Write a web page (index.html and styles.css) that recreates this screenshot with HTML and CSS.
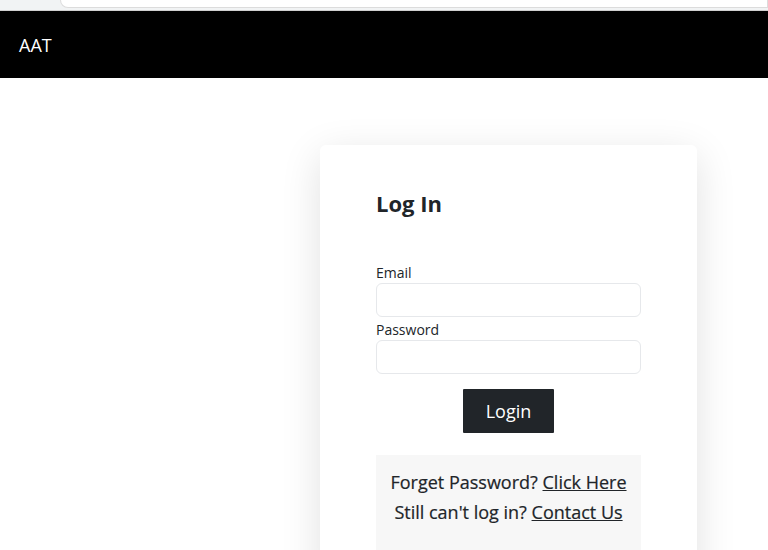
FILE: index.html
```html
<!DOCTYPE html>
<html lang="en">
<head>
    <meta charset="UTF-8">
    <meta name="viewport" content="width=device-width, initial-scale=1.0">
    <title>AAT - Log In</title>
    <link rel="stylesheet" href="styles.css">
</head>
<body>
    <div class="chrome">
        <div class="chrome-bar"></div>
    </div>

    <nav class="navbar">
        <span class="brand">AAT</span>
    </nav>

    <main class="page">
        <div class="login-card">
            <h1 class="login-title">Log In</h1>

            <form class="login-form">
                <label for="email">Email</label>
                <input type="email" id="email" class="field">
                <label for="password">Password</label>
                <input type="password" id="password" class="field">
                <div class="actions">
                    <button type="button" class="login-btn">Login</button>
                </div>
            </form>

            <div class="help-box">
                <p>Forget Password? <a href="#">Click Here</a></p>
                <p>Still can't log in? <a href="#">Contact Us</a></p>
            </div>
        </div>
    </main>
</body>
</html>
```

FILE: styles.css
```css
/* Global Reset */
* {
    margin: 0;
    padding: 0;
    box-sizing: border-box;
}

body {
    font-family: 'Open Sans', 'Noto Sans', sans-serif;
    color: #212529;
    background: #fff;
    overflow: hidden;
}

/* Top browser strip */
.chrome {
    height: 11px;
    background: #f1f3f4;
    border-bottom: 1px solid #d0d0d0;
    padding-left: 60px;
}

.chrome-bar {
    height: 8px;
    background: #fff;
    border: 1px solid #dcdcdc;
    border-top: none;
    border-radius: 0 0 0 8px;
}

/* Navbar */
.navbar {
    height: 67px;
    background: #000;
    display: flex;
    align-items: center;
    padding-left: 19px;
}

.brand {
    color: #fff;
    font-size: 18px;
}

/* Card */
.page {
    padding-top: 67px;
    padding-left: 320px;
}

.login-card {
    width: 377px;
    height: 440px;
    background: #fff;
    border-radius: 6px;
    box-shadow: 0 10px 40px rgba(0, 0, 0, 0.12);
    padding: 43px 56px;
}

.login-title {
    font-size: 22px;
    font-weight: 700;
    line-height: 30px;
    margin-bottom: 45px;
}

.login-form label {
    display: block;
    font-size: 14px;
    line-height: 20px;
}

.field {
    display: block;
    width: 100%;
    height: 34px;
    border: 1px solid #e6e8eb;
    border-radius: 6px;
    margin-bottom: 3px;
}

.actions {
    display: flex;
    justify-content: center;
    margin-top: 15px;
}

.login-btn {
    width: 91px;
    height: 44px;
    background: #212529;
    color: #fff;
    border: none;
    border-radius: 1px;
    font-family: inherit;
    font-size: 18px;
}

/* Help box */
.help-box {
    margin-top: 22px;
    background: #f7f7f7;
    padding: 12px 0 30px;
    text-align: center;
}

.help-box p {
    font-size: 18px;
    font-weight: 500;
    line-height: 30px;
    -webkit-text-stroke: 0.2px #212529;
}

.help-box a {
    color: #212529;
}
```
